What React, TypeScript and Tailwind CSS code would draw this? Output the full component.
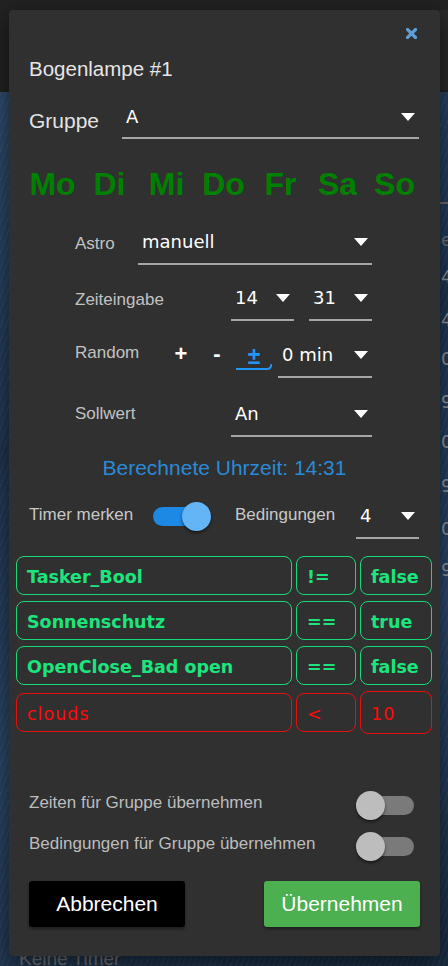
import React from "react";

const SANS = "font-['Liberation_Sans',Arial,sans-serif]";
const DJ = "font-['DejaVu_Sans',Verdana,sans-serif]";

function Arrow() {
  return (
    <span className="block w-0 h-0 border-l-[7px] border-r-[7px] border-t-[8px] border-l-transparent border-r-transparent border-t-white" />
  );
}

function Select({
  value,
  className = "",
  pb = "pb-[9px]",
  arrowPos = "bottom-[17px]",
}: {
  value: string;
  className?: string;
  pb?: string;
  arrowPos?: string;
}) {
  return (
    <div className={`relative flex items-end border-b-2 border-[#a6a6a6] pl-[4px] ${pb} ${className}`}>
      <span className={`${DJ} text-[18px] leading-[24px] text-white`}>{value}</span>
      <span className={`absolute right-[4px] ${arrowPos} flex`}>
        <Arrow />
      </span>
    </div>
  );
}

function Toggle({ on }: { on: boolean }) {
  return (
    <div className="relative w-[58px] h-[29px] shrink-0">
      {on ? (
        <>
          <div className="absolute left-0 top-[5px] w-[51px] h-[19px] rounded-full bg-[#1e88e5]" />
          <div className="absolute right-0 top-0 w-[29px] h-[29px] rounded-full bg-[#64b5f6] shadow-[0_2px_3px_rgba(0,0,0,0.5)]" />
        </>
      ) : (
        <>
          <div className="absolute right-0 top-[5px] w-[51px] h-[19px] rounded-full bg-[#7a7a7a]" />
          <div className="absolute left-0 top-0 w-[29px] h-[29px] rounded-full bg-[#bdbdbd] shadow-[0_2px_3px_rgba(0,0,0,0.5)]" />
        </>
      )}
    </div>
  );
}

type Cond = { a: string; op: string; b: string; ok: boolean };

const conds: Cond[] = [
  { a: "Tasker_Bool", op: "!=", b: "false", ok: true },
  { a: "Sonnenschutz", op: "==", b: "true", ok: true },
  { a: "OpenClose_Bad open", op: "==", b: "false", ok: true },
  { a: "clouds", op: "<", b: "10", ok: false },
];

function CondBox({ text, ok, className }: { text: string; ok: boolean; className: string }) {
  return (
    <div
      className={`flex items-center pt-[3px] px-[10px] rounded-[8px] border text-[17.5px] leading-[24px] ${DJ} ${
        ok
          ? "border-[#19d877] text-[#1ce57e] font-bold"
          : "border-[#e80f0f] text-[#ff0a0a] font-normal tracking-[1px]"
      } ${className}`}
    >
      {text}
    </div>
  );
}

const bgNums: { t: string; y: string }[] = [
  { t: "ei", y: "top-[229px]" },
  { t: "4", y: "top-[266px]" },
  { t: "4", y: "top-[309px]" },
  { t: "0", y: "top-[348px]" },
  { t: "9", y: "top-[391px]" },
  { t: "0", y: "top-[431px]" },
  { t: "9", y: "top-[475px]" },
  { t: "0", y: "top-[518px]" },
  { t: "9", y: "top-[559px]" },
];

export default function App() {
  const days = ["Mo", "Di", "Mi", "Do", "Fr", "Sa", "So"];
  return (
    <div className={`relative w-[448px] h-[966px] overflow-hidden bg-[#222222] ${SANS}`}>
      {/* page behind the dialog */}
      <div className="absolute left-0 right-0 top-[92px] bottom-0 bg-[linear-gradient(160deg,#2d4b6d_0%,#1f3550_35%,#2a4566_65%,#1a2c42_100%)]" />
      <div className="absolute left-0 right-0 top-[92px] bottom-0 bg-[repeating-linear-gradient(110deg,rgba(255,255,255,0.05)_0px,rgba(255,255,255,0.05)_1px,transparent_1px,transparent_5px)]" />
      <div className="absolute left-[440px] top-[10px] w-[8px] h-[80px] bg-[#2a2a2a]" />
      <div className="absolute left-[440px] top-[202px] w-[8px] h-[2px] bg-[#6b6b6b]" />
      {bgNums.map((n, i) => (
        <div
          key={i}
          className={`absolute left-[441px] ${n.y} text-[18px] leading-[22px] ${
            i === 0 ? "text-[#777777]" : "text-[#9a9a9a]"
          } ${DJ}`}
        >
          {n.t}
        </div>
      ))}
      <div className="absolute left-[19px] top-[948px] text-[19px] leading-[22px] text-[#7a7a7a]">Keine Timer</div>

      {/* dialog */}
      <div className="absolute left-[9px] top-[10px] w-[431px] h-[946px] rounded-[4px] bg-[#303030] shadow-[0_8px_24px_rgba(0,0,0,0.6)] flex flex-col pt-[47px]">
        <button className="absolute left-[397px] top-[18px] w-[11px] h-[11px] flex">
          <svg width="11" height="11" viewBox="0 0 11 11">
            <path d="M1.5 1.5 L9.5 9.5 M9.5 1.5 L1.5 9.5" stroke="#5e9fd8" strokeWidth="3.2" strokeLinecap="square" />
          </svg>
        </button>

        <div className="pl-[20px] text-[20.5px] leading-[24px] text-[#e6e6e6]">Bogenlampe #1</div>

        <div className="mt-[19px] h-[39px] flex items-end pl-[20px] pr-[21px]">
          <div className="w-[93px] mb-[6px] text-[21px] leading-[24px] text-[#e3e3e3]">Gruppe</div>
          <Select value="A" className="flex-1" pb="pb-[8px]" arrowPos="bottom-[16px]" />
        </div>

        <div className="mt-[27px] ml-[15px] w-[399px] grid grid-cols-7">
          {days.map((d) => (
            <div key={d} className="text-center text-[32px] leading-[36px] font-bold text-[#008000]">
              {d}
            </div>
          ))}
        </div>

        <div className="ml-[66px] w-[297px] flex flex-col">
          <div className="mt-[28px] h-[35px] flex items-end justify-between">
            <div className="mb-[11px] text-[17px] leading-[20px] text-[#c2c2c2]">Astro</div>
            <Select value="manuell" className="w-[234px]" />
          </div>

          <div className="mt-[21px] h-[35px] flex items-end justify-between">
            <div className="mb-[11px] text-[17px] leading-[20px] text-[#c2c2c2]">Zeiteingabe</div>
            <div className="flex gap-[15px]">
              <Select value="14" className="w-[63px]" />
              <Select value="31" className="w-[63px]" />
            </div>
          </div>

          <div className="mt-[22px] h-[35px] flex items-end justify-between">
            <div className="mb-[15px] text-[17px] leading-[20px] text-[#c2c2c2]">Random</div>
            <div className="flex items-end">
              <div className="w-[26px] mb-[12px] text-center text-[22px] leading-[24px] font-bold text-white">+</div>
              <div className="ml-[10px] w-[26px] mb-[12px] text-center text-[22px] leading-[24px] font-bold text-white">-</div>
              <div className="relative ml-[6px] w-[36px] h-[28px] mb-[8px] flex items-center justify-center text-[23px] leading-[24px] font-bold text-[#2196f3]">
                ±
                <svg className="absolute left-0 bottom-0" width="36" height="8" viewBox="0 0 36 8">
                  <path d="M0 7 H31 Q35 7 35.5 2" stroke="#2196f3" strokeWidth="2" fill="none" />
                </svg>
              </div>
              <Select value="0 min" className="ml-[6px] w-[94px]" />
            </div>
          </div>

          <div className="mt-[24px] h-[35px] flex items-end justify-between">
            <div className="mb-[13px] text-[17px] leading-[20px] text-[#c2c2c2]">Sollwert</div>
            <Select value="An" className="w-[141px]" />
          </div>
        </div>

        <div className="mt-[18px] text-center text-[21px] leading-[26px] text-[#2a8ad8]">Berechnete Uhrzeit: 14:31</div>

        <div className="mt-[23px] h-[35px] flex items-end pl-[20px] pr-[21px]">
          <div className="w-[124px] mb-[14px] text-[17px] leading-[20px] text-[#c8c8c8]">Timer merken</div>
          <div className="mb-[8px]">
            <Toggle on />
          </div>
          <div className="ml-[24px] mb-[14px] text-[17px] leading-[20px] text-[#c8c8c8]">Bedingungen</div>
          <Select value="4" className="ml-auto w-[63px]" />
        </div>

        <div className="mt-[17px] ml-[7px] w-[416px] flex flex-col gap-[6px]">
          {conds.map((c, i) => (
            <div key={i} className={`flex items-center gap-[4px] ${i === 3 ? "h-[43px]" : "h-[39px]"}`}>
              <CondBox text={c.a} ok={c.ok} className="w-[276px] h-[39px]" />
              <CondBox text={c.op} ok={c.ok} className="w-[60px] h-[39px]" />
              <CondBox text={c.b} ok={c.ok} className={`w-[72px] ${i === 3 ? "h-[43px]" : "h-[39px]"}`} />
            </div>
          ))}
        </div>

        <div className="mt-[56px] h-[30px] flex items-center justify-between pl-[20px] pr-[26px]">
          <div className="mb-[4px] text-[17px] leading-[20px] text-[#bdbdbd]">Zeiten für Gruppe übernehmen</div>
          <Toggle on={false} />
        </div>
        <div className="mt-[11px] h-[30px] flex items-center justify-between pl-[20px] pr-[26px]">
          <div className="mb-[4px] text-[17px] leading-[20px] text-[#bdbdbd]">Bedingungen für Gruppe übernehmen</div>
          <Toggle on={false} />
        </div>

        <div className="mt-[20px] flex justify-between px-[20px]">
          <button className="w-[156px] h-[46px] rounded-[3px] bg-black text-white text-[21px] leading-[24px] shadow-[0_2px_3px_rgba(0,0,0,0.4)]">
            Abbrechen
          </button>
          <button className="w-[156px] h-[46px] rounded-[3px] bg-[#4caf50] text-white text-[21px] leading-[24px] shadow-[0_2px_3px_rgba(0,0,0,0.4)]">
            Übernehmen
          </button>
        </div>
      </div>
    </div>
  );
}
